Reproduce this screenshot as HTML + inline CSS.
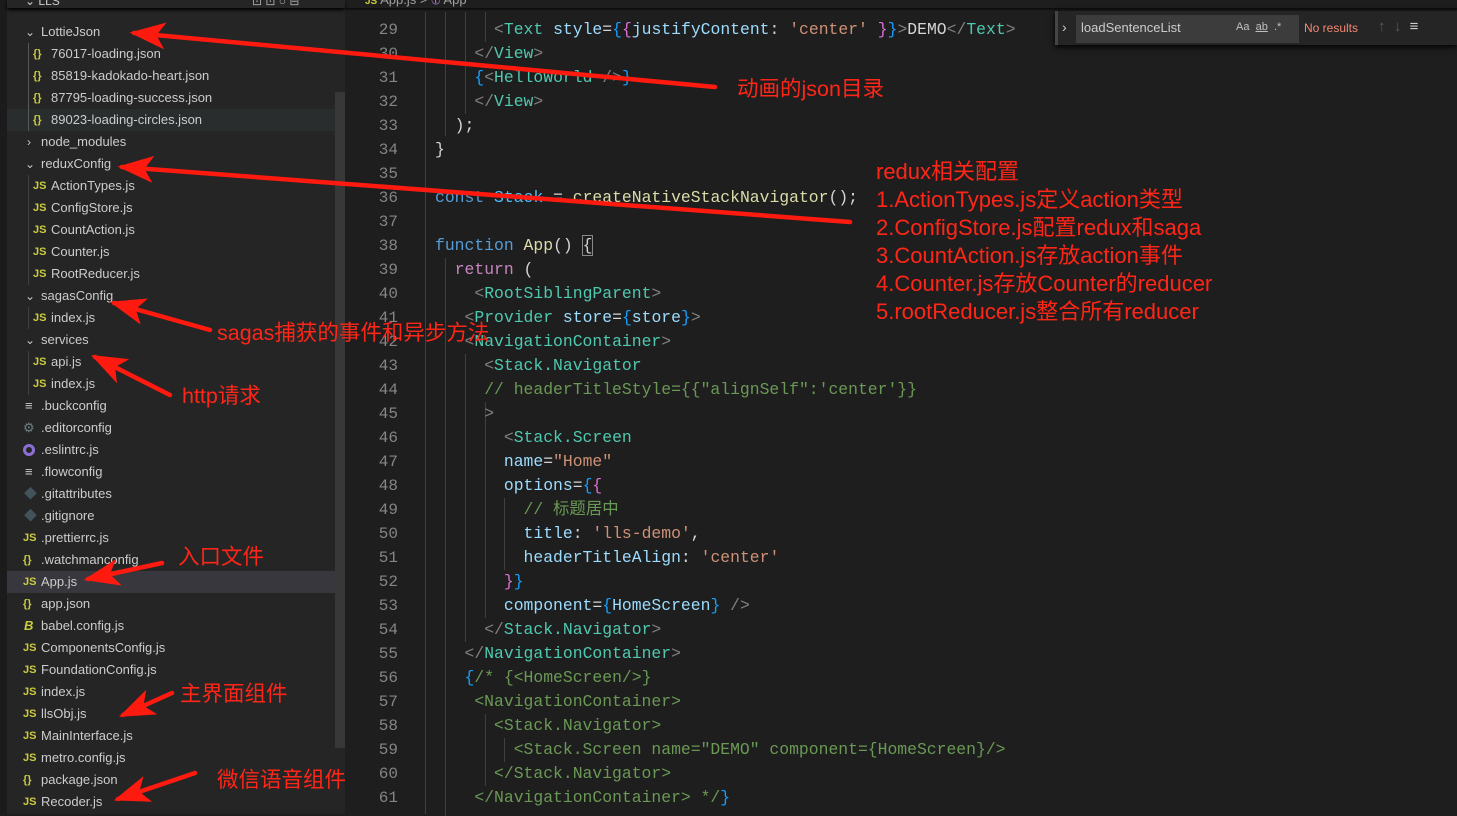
<!DOCTYPE html>
<html><head><meta charset="utf-8"><style>
*{margin:0;padding:0;box-sizing:border-box}
body{width:1457px;height:814px;background:#1e1e1e;overflow:hidden;position:relative;font-family:"Liberation Sans","Noto Sans CJK SC",sans-serif}
#side{position:absolute;left:0;top:0;width:345px;height:814px;background:#252526}
#strip{position:absolute;left:0;top:0;width:7px;height:814px;background:#1b1b1c}
.r{position:absolute;left:7px;width:328px;height:22px;line-height:22px;font-size:13px;color:#cccccc;white-space:nowrap}
.r span{position:absolute}
.ic{font-size:11px;font-weight:bold;color:#cbcb41}
.chev{color:#c5c5c5;font-size:12px}
.ln{position:absolute;left:345px;width:53px;text-align:right;font-family:"Liberation Mono",monospace;font-size:16px;color:#858585;height:24px;line-height:24px}
.cl{position:absolute;left:435px;font-family:"Liberation Mono","Noto Sans CJK SC",monospace;font-size:16.4px;color:#d4d4d4;white-space:pre;height:24px;line-height:24px}
.t{color:#4ec9b0}.g{color:#808080}.a{color:#9cdcfe}.s{color:#ce9178}.k{color:#569cd6}.p{color:#c586c0}.f{color:#dcdcaa}.b{color:#179fff}.y{color:#ffd700}.c{color:#6a9955}.m{color:#da70d6}
.guide{position:absolute;width:1px;background:#404040}
.ann{position:absolute;color:#ff2617;font-family:"Liberation Sans","Noto Sans CJK SC",sans-serif;font-size:21.5px;white-space:nowrap;line-height:28px}
#code{position:absolute;left:0;top:2px;width:1457px;height:814px}
</style></head><body>
<div id="side">
<div id="strip"></div>
<div style="position:absolute;left:335px;top:92px;width:10px;height:656px;background:#383838"></div>
<div style="position:absolute;left:7px;top:109px;width:328px;height:22px;background:#2a2d2e"></div>
<div style="position:absolute;left:7px;top:571px;width:328px;height:22px;background:#37373d"></div>
<div class="guide" style="left:28px;top:43px;height:88px;background:#585858"></div>
<div class="guide" style="left:28px;top:175px;height:110px"></div>
<div class="guide" style="left:28px;top:307px;height:22px"></div>
<div class="guide" style="left:28px;top:351px;height:44px"></div>
<div style="position:absolute;left:7px;top:0;width:338px;height:8px;background:#252526;box-shadow:0 2px 3px #000"></div>
<div class="r" style="top:-3px;height:10px;line-height:8px;font-size:12px"><span style="left:18px">⌄ LLS</span><span style="left:245px;color:#aaa">⊡ ⊡ ○ ⊟</span></div>
<div class="r" style="top:21px"><span class="chev" style="left:18px">⌄</span><span style="left:34px">LottieJson</span></div>
<div class="r" style="top:43px"><span class="ic" style="left:26px">{}</span><span style="left:44px">76017-loading.json</span></div>
<div class="r" style="top:65px"><span class="ic" style="left:26px">{}</span><span style="left:44px">85819-kadokado-heart.json</span></div>
<div class="r" style="top:87px"><span class="ic" style="left:26px">{}</span><span style="left:44px">87795-loading-success.json</span></div>
<div class="r" style="top:109px"><span class="ic" style="left:26px">{}</span><span style="left:44px">89023-loading-circles.json</span></div>
<div class="r" style="top:131px"><span class="chev" style="left:20px">›</span><span style="left:34px">node_modules</span></div>
<div class="r" style="top:153px"><span class="chev" style="left:18px">⌄</span><span style="left:34px">reduxConfig</span></div>
<div class="r" style="top:175px"><span class="ic" style="left:26px">JS</span><span style="left:44px">ActionTypes.js</span></div>
<div class="r" style="top:197px"><span class="ic" style="left:26px">JS</span><span style="left:44px">ConfigStore.js</span></div>
<div class="r" style="top:219px"><span class="ic" style="left:26px">JS</span><span style="left:44px">CountAction.js</span></div>
<div class="r" style="top:241px"><span class="ic" style="left:26px">JS</span><span style="left:44px">Counter.js</span></div>
<div class="r" style="top:263px"><span class="ic" style="left:26px">JS</span><span style="left:44px">RootReducer.js</span></div>
<div class="r" style="top:285px"><span class="chev" style="left:18px">⌄</span><span style="left:34px">sagasConfig</span></div>
<div class="r" style="top:307px"><span class="ic" style="left:26px">JS</span><span style="left:44px">index.js</span></div>
<div class="r" style="top:329px"><span class="chev" style="left:18px">⌄</span><span style="left:34px">services</span></div>
<div class="r" style="top:351px"><span class="ic" style="left:26px">JS</span><span style="left:44px">api.js</span></div>
<div class="r" style="top:373px"><span class="ic" style="left:26px">JS</span><span style="left:44px">index.js</span></div>
<div class="r" style="top:395px"><span style="left:18px;color:#ccc">≡</span><span style="left:34px">.buckconfig</span></div>
<div class="r" style="top:417px"><span style="left:16px;color:#6d8086">⚙</span><span style="left:34px">.editorconfig</span></div>
<div class="r" style="top:439px"><span style="left:16px;top:5px;width:12px;height:12px;border-radius:50%;border:3px solid #8b6fd6"></span><span style="left:34px">.eslintrc.js</span></div>
<div class="r" style="top:461px"><span style="left:18px;color:#ccc">≡</span><span style="left:34px">.flowconfig</span></div>
<div class="r" style="top:483px"><span style="left:17px;color:#41535b">◆</span><span style="left:34px">.gitattributes</span></div>
<div class="r" style="top:505px"><span style="left:17px;color:#41535b">◆</span><span style="left:34px">.gitignore</span></div>
<div class="r" style="top:527px"><span class="ic" style="left:16px">JS</span><span style="left:34px">.prettierrc.js</span></div>
<div class="r" style="top:549px"><span class="ic" style="left:16px">{}</span><span style="left:34px">.watchmanconfig</span></div>
<div class="r" style="top:571px"><span class="ic" style="left:16px">JS</span><span style="left:34px">App.js</span></div>
<div class="r" style="top:593px"><span class="ic" style="left:16px">{}</span><span style="left:34px">app.json</span></div>
<div class="r" style="top:615px"><span style="left:17px;color:#cbcb41;font-style:italic;font-weight:bold">B</span><span style="left:34px">babel.config.js</span></div>
<div class="r" style="top:637px"><span class="ic" style="left:16px">JS</span><span style="left:34px">ComponentsConfig.js</span></div>
<div class="r" style="top:659px"><span class="ic" style="left:16px">JS</span><span style="left:34px">FoundationConfig.js</span></div>
<div class="r" style="top:681px"><span class="ic" style="left:16px">JS</span><span style="left:34px">index.js</span></div>
<div class="r" style="top:703px"><span class="ic" style="left:16px">JS</span><span style="left:34px">llsObj.js</span></div>
<div class="r" style="top:725px"><span class="ic" style="left:16px">JS</span><span style="left:34px">MainInterface.js</span></div>
<div class="r" style="top:747px"><span class="ic" style="left:16px">JS</span><span style="left:34px">metro.config.js</span></div>
<div class="r" style="top:769px"><span class="ic" style="left:16px">{}</span><span style="left:34px">package.json</span></div>
<div class="r" style="top:791px"><span class="ic" style="left:16px">JS</span><span style="left:34px">Recoder.js</span></div>
</div>

<div style="position:absolute;left:365px;top:-8px;font-size:13px;color:#a0a0a0;white-space:nowrap"><span style="color:#cbcb41;font-size:10px;font-weight:bold">JS</span> App.js &gt; <span style="color:#b180d7">⦶</span> App</div>
<div style="position:absolute;left:345px;top:8px;width:1112px;height:3px;background:linear-gradient(#0a0a0a,#1e1e1e)"></div>

<div id="code">
<div class="guide" style="left:425px;top:10px;height:802px"></div>
<div class="guide" style="left:445px;top:10px;height:124px"></div>
<div class="guide" style="left:445px;top:256px;height:558px"></div>
<div class="guide" style="left:465px;top:10px;height:102px"></div>
<div class="guide" style="left:485px;top:10px;height:30px"></div>
<div class="guide" style="left:465px;top:352px;height:288px"></div>
<div class="guide" style="left:485px;top:400px;height:216px"></div>
<div class="guide" style="left:504px;top:496px;height:72px"></div>
<div class="guide" style="left:485px;top:712px;height:72px"></div>
<div class="guide" style="left:504px;top:736px;height:24px"></div>

<div class="ln" style="top:16px">29</div><div class="cl" style="top:16px">      <span class="g">&lt;</span><span class="t">Text</span> <span class="a">style</span>=<span class="b">{</span><span class="m">{</span><span class="a">justifyContent</span>: <span class="s">'center'</span> <span class="m">}</span><span class="b">}</span><span class="g">&gt;</span>DEMO<span class="g">&lt;/</span><span class="t">Text</span><span class="g">&gt;</span></div>
<div class="ln" style="top:40px">30</div><div class="cl" style="top:40px">    <span class="g">&lt;/</span><span class="t">View</span><span class="g">&gt;</span></div>
<div class="ln" style="top:64px">31</div><div class="cl" style="top:64px">    <span class="b">{</span><span class="g">&lt;</span><span class="t">HelloWorld</span> <span class="g">/&gt;</span><span class="b">}</span></div>
<div class="ln" style="top:88px">32</div><div class="cl" style="top:88px">    <span class="g">&lt;/</span><span class="t">View</span><span class="g">&gt;</span></div>
<div class="ln" style="top:112px">33</div><div class="cl" style="top:112px">  );</div>
<div class="ln" style="top:136px">34</div><div class="cl" style="top:136px">}</div>
<div class="ln" style="top:160px">35</div>
<div class="ln" style="top:184px">36</div><div class="cl" style="top:184px"><span class="k">const</span> <span class="a" style="color:#4fc1ff">Stack</span> = <span class="f">createNativeStackNavigator</span>();</div>
<div class="ln" style="top:208px">37</div>
<div class="ln" style="top:232px">38</div><div class="cl" style="top:232px"><span class="k">function</span> <span class="f">App</span>() <span style="outline:1px solid #888">{</span></div>
<div class="ln" style="top:256px">39</div><div class="cl" style="top:256px">  <span class="p">return</span> (</div>
<div class="ln" style="top:280px">40</div><div class="cl" style="top:280px">    <span class="g">&lt;</span><span class="t">RootSiblingParent</span><span class="g">&gt;</span></div>
<div class="ln" style="top:304px">41</div><div class="cl" style="top:304px">   <span class="g">&lt;</span><span class="t">Provider</span> <span class="a">store</span>=<span class="b">{</span><span class="a">store</span><span class="b">}</span><span class="g">&gt;</span></div>
<div class="ln" style="top:328px">42</div><div class="cl" style="top:328px">   <span class="g">&lt;</span><span class="t">NavigationContainer</span><span class="g">&gt;</span></div>
<div class="ln" style="top:352px">43</div><div class="cl" style="top:352px">     <span class="g">&lt;</span><span class="t">Stack.Navigator</span></div>
<div class="ln" style="top:376px">44</div><div class="cl" style="top:376px">     <span class="c">// headerTitleStyle={{"alignSelf":'center'}}</span></div>
<div class="ln" style="top:400px">45</div><div class="cl" style="top:400px">     <span class="g">&gt;</span></div>
<div class="ln" style="top:424px">46</div><div class="cl" style="top:424px">       <span class="g">&lt;</span><span class="t">Stack.Screen</span></div>
<div class="ln" style="top:448px">47</div><div class="cl" style="top:448px">       <span class="a">name</span>=<span class="s">"Home"</span></div>
<div class="ln" style="top:472px">48</div><div class="cl" style="top:472px">       <span class="a">options</span>=<span class="b">{</span><span class="m">{</span></div>
<div class="ln" style="top:496px">49</div><div class="cl" style="top:496px">         <span class="c">// 标题居中</span></div>
<div class="ln" style="top:520px">50</div><div class="cl" style="top:520px">         <span class="a">title</span>: <span class="s">'lls-demo'</span>,</div>
<div class="ln" style="top:544px">51</div><div class="cl" style="top:544px">         <span class="a">headerTitleAlign</span>: <span class="s">'center'</span></div>
<div class="ln" style="top:568px">52</div><div class="cl" style="top:568px">       <span class="m">}</span><span class="b">}</span></div>
<div class="ln" style="top:592px">53</div><div class="cl" style="top:592px">       <span class="a">component</span>=<span class="b">{</span><span class="a">HomeScreen</span><span class="b">}</span> <span class="g">/&gt;</span></div>
<div class="ln" style="top:616px">54</div><div class="cl" style="top:616px">     <span class="g">&lt;/</span><span class="t">Stack.Navigator</span><span class="g">&gt;</span></div>
<div class="ln" style="top:640px">55</div><div class="cl" style="top:640px">   <span class="g">&lt;/</span><span class="t">NavigationContainer</span><span class="g">&gt;</span></div>
<div class="ln" style="top:664px">56</div><div class="cl" style="top:664px">   <span class="b">{</span><span class="c">/* {&lt;HomeScreen/&gt;}</span></div>
<div class="ln" style="top:688px">57</div><div class="cl c" style="top:688px">    &lt;NavigationContainer&gt;</div>
<div class="ln" style="top:712px">58</div><div class="cl c" style="top:712px">      &lt;Stack.Navigator&gt;</div>
<div class="ln" style="top:736px">59</div><div class="cl c" style="top:736px">        &lt;Stack.Screen name="DEMO" component={HomeScreen}/&gt;</div>
<div class="ln" style="top:760px">60</div><div class="cl c" style="top:760px">      &lt;/Stack.Navigator&gt;</div>
<div class="ln" style="top:784px">61</div><div class="cl" style="top:784px">    <span class="c">&lt;/NavigationContainer&gt; */</span><span class="b">}</span></div>
</div>

<div style="position:absolute;left:1055px;top:11px;width:402px;height:34px;background:#252526;border-left:3px solid #454545;box-shadow:0 2px 6px #000"></div>
<div style="position:absolute;left:1062px;top:19px;color:#ccc;font-size:14px">›</div>
<div style="position:absolute;left:1076px;top:15px;width:223px;height:28px;background:#3c3c3c"></div>
<div style="position:absolute;left:1081px;top:20px;color:#ccc;font-size:13px">loadSentenceList</div>
<div style="position:absolute;left:1236px;top:21px;color:#c0c0c0;font-size:11px;white-space:nowrap">Aa &nbsp;<u>ab</u> &nbsp;.*</div>
<div style="position:absolute;left:1304px;top:21px;color:#f48771;font-size:12px">No results</div>
<div style="position:absolute;left:1378px;top:18px;color:#5a5a5a;font-size:15px;white-space:nowrap">↑ &nbsp;↓ &nbsp;<span style="color:#ccc">≡</span></div>

<div class="ann" style="left:737px;top:75px">动画的json目录</div>
<div class="ann" style="left:876px;top:158px;font-size:22px">redux相关配置<br>1.ActionTypes.js定义action类型<br>2.ConfigStore.js配置redux和saga<br>3.CountAction.js存放action事件<br>4.Counter.js存放Counter的reducer<br>5.rootReducer.js整合所有reducer</div>
<div class="ann" style="left:217px;top:319px">sagas捕获的事件和异步方法</div>
<div class="ann" style="left:182px;top:382px">http请求</div>
<div class="ann" style="left:178px;top:543px">入口文件</div>
<div class="ann" style="left:180px;top:680px">主界面组件</div>
<div class="ann" style="left:217px;top:766px">微信语音组件</div>

<svg width="1457" height="814" style="position:absolute;left:0;top:0">
<defs><marker id="h" markerWidth="8" markerHeight="6" refX="1" refY="3" orient="auto" markerUnits="strokeWidth"><path d="M8,0 L0,3 L8,6 L6,3 Z" fill="#ff1a10"/></marker></defs>
<g stroke="#ff1a10" stroke-width="4.5" fill="none" marker-start="url(#h)" stroke-linecap="round">
<line x1="134" y1="33" x2="715" y2="87"/>
<line x1="122" y1="167" x2="850" y2="222"/>
<line x1="114" y1="303" x2="210" y2="330"/>
<line x1="95" y1="357" x2="170" y2="395"/>
<line x1="88" y1="579" x2="162" y2="563"/>
<line x1="123" y1="715" x2="172" y2="693"/>
<line x1="118" y1="799" x2="195" y2="773"/>
</g>
</svg>
</body></html>
